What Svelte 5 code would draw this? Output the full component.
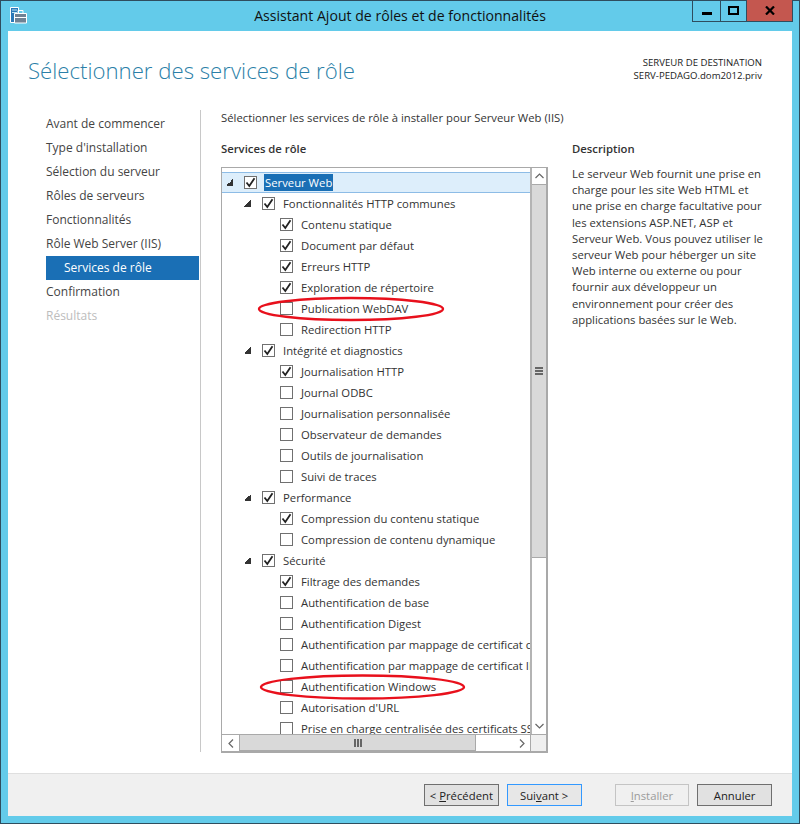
<script>
  const nav = [
    { label: "Avant de commencer" },
    { label: "Type d'installation" },
    { label: "Sélection du serveur" },
    { label: "Rôles de serveurs" },
    { label: "Fonctionnalités" },
    { label: "Rôle Web Server (IIS)" },
    { label: "Services de rôle", active: true },
    { label: "Confirmation" },
    { label: "Résultats", disabled: true }
  ];

  // depth, label, checked, has children
  const tree = [
    [0, "Serveur Web", true, true],
    [1, "Fonctionnalités HTTP communes", true, true],
    [2, "Contenu statique", true],
    [2, "Document par défaut", true],
    [2, "Erreurs HTTP", true],
    [2, "Exploration de répertoire", true],
    [2, "Publication WebDAV", false],
    [2, "Redirection HTTP", false],
    [1, "Intégrité et diagnostics", true, true],
    [2, "Journalisation HTTP", true],
    [2, "Journal ODBC", false],
    [2, "Journalisation personnalisée", false],
    [2, "Observateur de demandes", false],
    [2, "Outils de journalisation", false],
    [2, "Suivi de traces", false],
    [1, "Performance", true, true],
    [2, "Compression du contenu statique", true],
    [2, "Compression de contenu dynamique", false],
    [1, "Sécurité", true, true],
    [2, "Filtrage des demandes", true],
    [2, "Authentification de base", false],
    [2, "Authentification Digest", false],
    [2, "Authentification par mappage de certificat client", false],
    [2, "Authentification par mappage de certificat IIS", false],
    [2, "Authentification Windows", false],
    [2, "Autorisation d'URL", false],
    [2, "Prise en charge centralisée des certificats SSL", false]
  ];
</script>

<div class="window">
  <header class="titlebar">
    <svg class="appicon" width="17" height="17" viewBox="0 0 17 17">
      <path d="M0.500 0.500h8v15h-8z" fill="#2a78b8" stroke="#fff" />
      <path d="M2 3h5M2 5.500h5" stroke="#bfe6f5" />
      <path d="M4.500 6.500h12v9.500h-12z" fill="#6f8294" stroke="#fff" />
      <path d="M8 6v-2.500h5v2.500" fill="none" stroke="#fff" />
      <path d="M5 10.500h11" stroke="#fff" />
    </svg>
    <div class="title">Assistant Ajout de rôles et de fonctionnalités</div>
    <div class="controls">
      <div class="ctl min"><span class="min-glyph"></span></div>
      <div class="ctl max"><span class="max-glyph"></span></div>
      <div class="ctl close">
        <svg width="10" height="9" viewBox="0 0 10 9"><path d="M1 0.500 L9 8.500 M9 0.500 L1 8.500" stroke="#000" stroke-width="2.200" /></svg>
      </div>
    </div>
  </header>

  <div class="client">
    <div class="head">
      <h1>Sélectionner des services de rôle</h1>
      <div class="dest">SERVEUR DE DESTINATION<br />SERV-PEDAGO.dom2012.priv</div>
    </div>

    <div class="main">
      <nav>
        {#each nav as item}
          <div class="nav-item" class:active={item.active} class:disabled={item.disabled}>{item.label}</div>
        {/each}
      </nav>

      <section class="content">
        <p class="intro">Sélectionner les services de rôle à installer pour Serveur Web (IIS)</p>
        <div class="columns">
          <div class="left">
            <h2>Services de rôle</h2>
            <div class="treebox">
              <div class="tree">
                {#each tree as [depth, label, checked, parent], i}
                  <div class="row" class:selected={i === 0} style="padding-left: {depth * 18 + 3}px">
                    <span class="arrow" class:on={parent}></span>
                    <span class="check">
                      {#if checked}
                        <svg width="11" height="11" viewBox="0 0 11 11"><path d="M1.500 5.500 L4.300 9 L9.500 1.200" fill="none" stroke="#222" stroke-width="1.800" /></svg>
                      {/if}
                    </span>
                    <span class="label">{label}</span>
                  </div>
                {/each}
              </div>
              <div class="vscroll">
                <div class="sbtn">
                  <svg width="9" height="6" viewBox="0 0 9 6"><path d="M0.500 5 L4.500 1 L8.500 5" fill="none" stroke="#666" stroke-width="1.200" /></svg>
                </div>
                <div class="vthumb"><span class="grip-h"></span></div>
                <div class="strack"></div>
                <div class="sbtn">
                  <svg width="9" height="6" viewBox="0 0 9 6"><path d="M0.500 1 L4.500 5 L8.500 1" fill="none" stroke="#666" stroke-width="1.200" /></svg>
                </div>
              </div>
              <div class="hscroll">
                <div class="hbtn">
                  <svg width="6" height="9" viewBox="0 0 6 9"><path d="M5 0.500 L1 4.500 L5 8.500" fill="none" stroke="#666" stroke-width="1.200" /></svg>
                </div>
                <div class="hthumb"><span class="grip-v"></span></div>
                <div class="strack"></div>
                <div class="hbtn">
                  <svg width="6" height="9" viewBox="0 0 6 9"><path d="M1 0.500 L5 4.500 L1 8.500" fill="none" stroke="#666" stroke-width="1.200" /></svg>
                </div>
              </div>
              <div class="corner"></div>
            </div>
          </div>
          <div class="desc">
            <h3>Description</h3>
            <p>Le serveur Web fournit une prise en<br />charge pour les site Web HTML et<br />une prise en charge facultative pour<br />les extensions ASP.NET, ASP et<br />Serveur Web. Vous pouvez utiliser le<br />serveur Web pour héberger un site<br />Web interne ou externe ou pour<br />fournir aux développeur un<br />environnement pour créer des<br />applications basées sur le Web.</p>
          </div>
        </div>
      </section>
    </div>

    <footer>
      <button class="b1">&lt; <u>P</u>récédent</button>
      <button class="b2 focus">Sui<u>v</u>ant &gt;</button>
      <button class="b3" disabled><u>I</u>nstaller</button>
      <button class="b4">Annuler</button>
    </footer>
  </div>

  <svg class="marks" width="800" height="824" viewBox="0 0 800 824" fill="none" stroke="#e8101c" stroke-width="2.400">
    <ellipse cx="351" cy="309" rx="92" ry="11" />
    <ellipse cx="362.500" cy="687" rx="101.500" ry="11.500" />
  </svg>
</div>

<style>
  :global(body) {
    margin: 0;
    background: #63cbea;
  }

  .window {
    position: relative;
    box-sizing: border-box;
    width: 800px;
    height: 824px;
    border: 1px solid #2f4d5e;
    background: #63cbea;
    display: flex;
    flex-direction: column;
    font-family: "Open Sans", "Liberation Sans", sans-serif;
    font-size: 11.300px;
    color: #333;
  }

  .titlebar {
    position: relative;
    height: 29px;
    flex: none;
  }

  .appicon {
    position: absolute;
    left: 9px;
    top: 6px;
  }

  .title {
    text-align: center;
    font-size: 14.100px;
    line-height: 30px;
    color: #111;
  }

  .controls {
    position: absolute;
    right: 6px;
    top: -1px;
    height: 22px;
    display: flex;
    box-sizing: border-box;
    border: 1px solid #2f4d5e;
    border-top: 0;
  }

  .ctl {
    display: flex;
    align-items: center;
    justify-content: center;
    height: 21px;
  }

  .min { width: 27px; border-right: 1px solid #2f4d5e; }
  .max { width: 25px; border-right: 1px solid #2f4d5e; }
  .close { width: 45px; background: #c4574f; }

  .min-glyph {
    width: 10px;
    height: 3px;
    background: #000;
    margin-top: 5px;
  }

  .max-glyph {
    box-sizing: border-box;
    width: 11px;
    height: 9px;
    border: 2px solid #000;
  }

  .client {
    flex: 1;
    min-height: 0;
    margin: 1px 7px 7px;
    background: #fff;
    display: flex;
    flex-direction: column;
  }

  .head {
    height: 79px;
    flex: none;
    position: relative;
    padding-left: 20px;
  }

  h1 {
    margin: 0;
    padding-top: 24px;
    font-size: 22.200px;
    font-weight: 300;
    line-height: 32px;
    color: #2b7fa8;
  }

  .dest {
    position: absolute;
    right: 30px;
    top: 25px;
    text-align: right;
    font-size: 9.600px;
    line-height: 13px;
    color: #222;
  }

  .main {
    flex: 1;
    min-height: 0;
    display: flex;
    padding-bottom: 21px;
  }

  nav {
    width: 153px;
    flex: none;
    margin-left: 38px;
    padding-top: 2px;
    border-right: 1px solid #c8c8c8;
    padding-right: 1px;
    font-size: 12px;
  }

  .nav-item {
    height: 24px;
    line-height: 24px;
    color: #444;
  }

  .nav-item.active {
    background: #1a6fb5;
    color: #fff;
    padding-left: 18px;
  }

  .nav-item.disabled {
    color: #bdbdbd;
  }

  .content {
    flex: 1;
    min-width: 0;
    padding-left: 20px;
  }

  .intro {
    margin: 0;
    line-height: 16px;
  }

  .columns {
    display: flex;
    margin-top: 15px;
  }

  .left {
    width: 327px;
    flex: none;
  }

  h2, h3 {
    margin: 0;
    font-size: 11.300px;
    font-weight: 600;
    line-height: 16px;
    color: #333;
  }

  .treebox {
    box-sizing: border-box;
    margin-top: 10px;
    height: 586px;
    border: 2px solid #a9a9a9;
    border-width: 1px 2px 2px 1px;
    display: grid;
    grid-template-columns: 1fr 16px;
    grid-template-rows: 1fr 17px;
  }

  .tree {
    overflow: hidden;
    padding-top: 4px;
    min-width: 0;
    min-height: 0;
  }

  .row {
    display: flex;
    align-items: center;
    height: 21px;
    white-space: nowrap;
    box-sizing: border-box;
    flex: none;
  }

  .row.selected {
    background: #ddeefb;
    box-shadow: inset 0 1px 0 #8dbce6, inset 0 -1px 0 #8dbce6;
  }

  .arrow {
    width: 7px;
    height: 7px;
    margin-right: 11px;
    flex: none;
    margin-left: 1px;
  }

  .arrow.on {
    background: linear-gradient(135deg, transparent 50%, #333 50%);
  }

  .check {
    box-sizing: border-box;
    width: 13px;
    height: 13px;
    border: 1px solid #707070;
    background: #fff;
    flex: none;
    margin-right: 7px;
    display: flex;
    align-items: center;
    justify-content: center;
  }

  .label {
    padding: 0 1px;
    line-height: 17px;
    color: #333;
  }

  .selected .label {
    background: #1a6fb5;
    color: #fff;
  }

  .vscroll {
    display: flex;
    flex-direction: column;
    border-left: 2px solid #b4b4b4;
    min-height: 0;
  }

  .sbtn {
    height: 16px;
    flex: none;
    display: flex;
    align-items: center;
    justify-content: center;
  }

  .vthumb {
    height: 372px;
    flex: none;
    background: #d9d9d9;
    border-top: 1px solid #a9a9a9;
    border-bottom: 1px solid #a9a9a9;
    display: flex;
    align-items: center;
    justify-content: center;
  }

  .strack {
    flex: 1;
  }

  .grip-h {
    width: 8px;
    height: 8px;
    background: repeating-linear-gradient(#666 0 2px, #d9d9d9 2px 3px);
  }

  .hscroll {
    display: flex;
    border-top: 1px solid #a9a9a9;
  }

  .hbtn {
    width: 17px;
    flex: none;
    display: flex;
    align-items: center;
    justify-content: center;
  }

  .hthumb {
    width: 235px;
    flex: none;
    background: #d9d9d9;
    border: 1px solid #a9a9a9;
    border-width: 0 1px 1px 1px;
    display: flex;
    align-items: center;
    justify-content: center;
  }

  .grip-v {
    width: 8px;
    height: 8px;
    background: repeating-linear-gradient(90deg, #666 0 2px, #d9d9d9 2px 3px);
  }

  .corner {
    background: #efefef;
    border-top: 1px solid #a9a9a9;
    border-left: 1px solid #a9a9a9;
  }

  .desc {
    padding-left: 24px;
  }

  .desc p {
    margin: 9px 0 0;
    line-height: 16.200px;
    white-space: nowrap;
  }

  footer {
    flex: none;
    box-sizing: border-box;
    height: 43px;
    background: #f0f0f0;
    border-top: 1px solid #dfdfdf;
    display: flex;
    align-items: center;
    padding: 0 20px 0 416px;
  }

  button {
    box-sizing: border-box;
    height: 22px;
    width: 75px;
    padding: 0;
    font: inherit;
    color: #222;
    background: #e1e1e1;
    border: 1px solid #6f6f6f;
  }

  .b1 { margin-right: 8px; }
  .b2 { margin-right: 33px; }
  .b3 { margin-right: 8px; }

  .focus {
    border-color: #3399ff;
    background: #e7e7e7;
  }

  button:disabled {
    color: #9b9b9b;
    border-color: #c4c4c4;
    background: #f0f0f0;
  }

  .marks {
    position: absolute;
    left: -1px;
    top: -1px;
    pointer-events: none;
  }
</style>
